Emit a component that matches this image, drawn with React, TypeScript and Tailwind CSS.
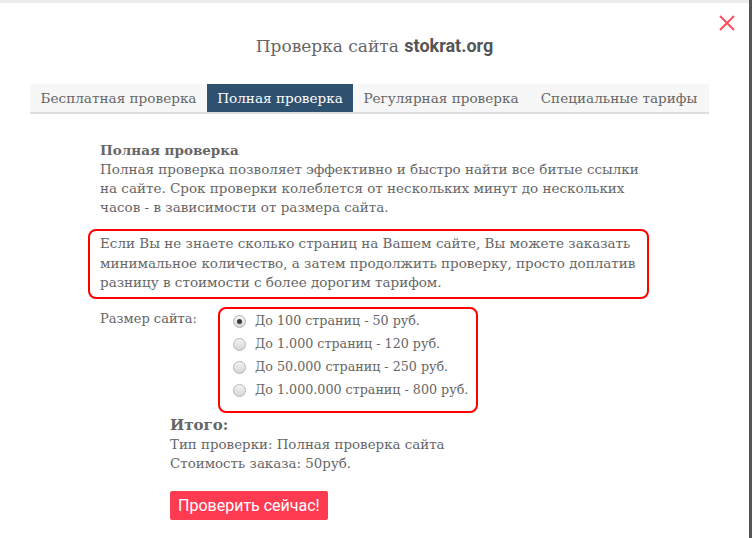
import React from 'react';

const tabs = [
  { label: 'Бесплатная проверка', w: 'w-[177px]' },
  { label: 'Полная проверка', w: 'w-[146px]', active: true },
  { label: 'Регулярная проверка', w: 'w-[176px]' },
  { label: 'Специальные тарифы', w: 'w-[180px]' },
];

const sizes = [
  { label: 'До 100 страниц - 50 руб.', checked: true },
  { label: 'До 1.000 страниц - 120 руб.' },
  { label: 'До 50.000 страниц - 250 руб.' },
  { label: 'До 1.000.000 страниц - 800 руб.' },
];

const Radio: React.FC<{ checked?: boolean }> = ({ checked }) => (
  <span className="flex h-[13px] w-[13px] items-center justify-center rounded-full border border-[#b5b5b5] bg-gradient-to-b from-[#f4f4f4] to-[#d6d6d6]">
    {checked && <span className="h-[5px] w-[5px] rounded-full bg-[#3a3a3a]" />}
  </span>
);

const App: React.FC = () => {
  return (
    <div className="flex h-[538px] w-[752px] overflow-hidden bg-white text-[#666] [font-family:'DejaVu_Serif',serif]">
      <div className="relative flex flex-1 flex-col">
        <div className="h-[3px] bg-[#ebebeb]" />

        {/* Close */}
        <button className="absolute right-[14px] top-[15px]">
          <svg width="16" height="16" viewBox="0 0 16 16">
            <path d="M1 1 L15 15 M15 1 L1 15" stroke="#ff4d5e" strokeWidth="2" />
          </svg>
        </button>

        {/* Title */}
        <h1 className="mt-[30px] text-center text-[17px] leading-[26px] text-[#666]">
          Проверка сайта <span className="font-bold text-[#555] [font-family:'Roboto',sans-serif] text-[18px]">stokrat.org</span>
        </h1>

        {/* Tabs */}
        <div className="ml-[30px] mt-[25px] flex h-[30px] w-[679px] border-b-2 border-[#dedede] bg-[#f7f7f7] text-[13.6px]">
          {tabs.map((t) => (
            <div
              key={t.label}
              className={`${t.w} flex items-center justify-center pt-[1px] ${t.active ? 'bg-[#2e5170] text-white' : 'text-[#666]'}`}
            >
              {t.label}
            </div>
          ))}
        </div>

        {/* Body */}
        <div className="ml-[100px] mt-[27px] w-[550px] text-[13.5px] leading-[19px]">
          <div className="font-bold">Полная проверка</div>
          <p>
            Полная проверка позволяет эффективно и быстро найти все битые ссылки на сайте. Срок проверки колеблется от нескольких минут до нескольких часов - в зависимости от размера сайта.
          </p>
        </div>

        <div className="ml-[88px] mt-[12px] w-[561px] rounded-[8px] border-2 border-[#ff0000] px-[10px] pb-[4px] pt-[3px] text-[13.5px] leading-[19.5px]">
          Если Вы не знаете сколько страниц на Вашем сайте, Вы можете заказать минимальное количество, а затем продолжить проверку, просто доплатив разницу в стоимости с более дорогим тарифом.
        </div>

        <div className="ml-[100px] mt-[8px] flex text-[13px]">
          <div className="w-[118px] pt-[2px] leading-[19px]">Размер сайта:</div>
          <div className="h-[106px] w-[260px] rounded-[8px] border-2 border-[#ff0000] pl-[13px] pt-[1px] text-[12.7px]">
            {sizes.map((s) => (
              <label key={s.label} className="flex h-[23px] items-center gap-[9px]">
                <Radio checked={s.checked} />
                <span>{s.label}</span>
              </label>
            ))}
          </div>
        </div>

        <div className="ml-[170px] mt-[2px] text-[13.4px] leading-[19px]">
          <div className="text-[15px] font-bold leading-[20px]">Итого:</div>
          <div>Тип проверки: Полная проверка сайта</div>
          <div>Стоимость заказа: 50руб.</div>
          <button className="mt-[18px] h-[29px] rounded-[2px] bg-[#ff3b52] px-[8px] text-[16px] text-white [font-family:'Roboto',sans-serif]">
            Проверить сейчас!
          </button>
        </div>
      </div>
      <div className="w-[3px] bg-[#555]" />
    </div>
  );
};

export default App;
